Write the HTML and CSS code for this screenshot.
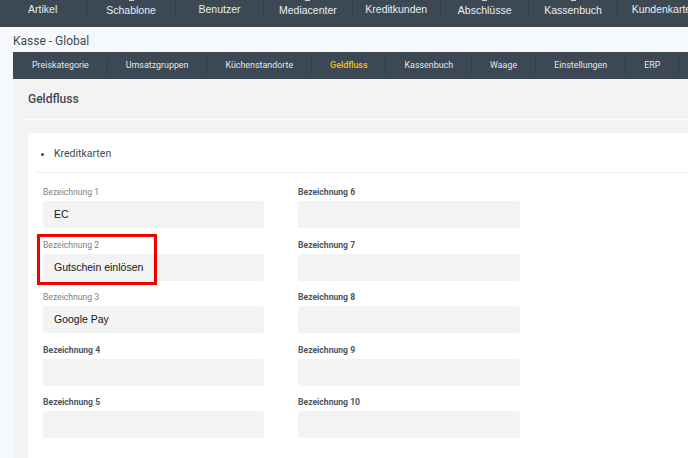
FILE: index.html
```html
<!DOCTYPE html>
<html lang="de">
<head>
<meta charset="utf-8">
<title>Kasse - Global</title>
<link rel="stylesheet" href="styles.css">
</head>
<body>
<nav class="topnav">
  <div class="topitem">Artikel</div>
  <div class="topitem has-icon"><span class="stub"></span>Schablone</div>
  <div class="topitem">Benutzer</div>
  <div class="topitem has-icon"><span class="stub"></span>Mediacenter</div>
  <div class="topitem">Kreditkunden</div>
  <div class="topitem has-icon"><span class="stub"></span>Abschlüsse</div>
  <div class="topitem has-icon"><span class="stub"></span>Kassenbuch</div>
  <div class="topitem">Kundenkarte</div>
</nav>
<h1 class="page-title">Kasse - Global</h1>
<div class="content">
  <nav class="subnav">
    <div class="subitem first">Preiskategorie</div>
    <div class="subitem">Umsatzgruppen</div>
    <div class="subitem">Küchenstandorte</div>
    <div class="subitem active">Geldfluss</div>
    <div class="subitem">Kassenbuch</div>
    <div class="subitem">Waage</div>
    <div class="subitem">Einstellungen</div>
    <div class="subitem">ERP</div>
    <div class="subitem"></div>
  </nav>
  <section class="panel">
    <h2 class="panel-head">Geldfluss</h2>
    <div class="panel-rule"></div>
    <div class="panel-body">
      <div class="card">
        <ul class="card-head"><li>Kreditkarten</li></ul>
        <div class="card-rule"></div>
        <div class="fields">
          <div class="col">
            <div class="field"><label class="lbl filled">Bezeichnung 1</label><div class="input">EC</div></div>
            <div class="field marked"><label class="lbl filled">Bezeichnung 2</label><div class="input">Gutschein einlösen</div><span class="redbox"></span></div>
            <div class="field"><label class="lbl filled">Bezeichnung 3</label><div class="input">Google Pay</div></div>
            <div class="field"><label class="lbl">Bezeichnung 4</label><div class="input"></div></div>
            <div class="field"><label class="lbl">Bezeichnung 5</label><div class="input"></div></div>
          </div>
          <div class="col wide">
            <div class="field"><label class="lbl">Bezeichnung 6</label><div class="input"></div></div>
            <div class="field"><label class="lbl">Bezeichnung 7</label><div class="input"></div></div>
            <div class="field"><label class="lbl">Bezeichnung 8</label><div class="input"></div></div>
            <div class="field"><label class="lbl">Bezeichnung 9</label><div class="input"></div></div>
            <div class="field"><label class="lbl">Bezeichnung 10</label><div class="input"></div></div>
          </div>
        </div>
      </div>
    </div>
  </section>
</div>
</body>
</html>
```
FILE: styles.css
```css
html, body {
  margin: 0;
  padding: 0;
  overflow: hidden;
  height: 458px;
}
body {
  background: #f5f9fc;
  font-family: Roboto, "Liberation Sans", sans-serif;
  color: #3d4a56;
}
.topnav {
  display: flex;
  height: 27px;
  background: #3c4955;
  align-items: flex-start;
  white-space: nowrap;
  overflow: hidden;
  margin-left: -1px;
}
.topitem {
  flex: 0 0 88.4px;
  height: 16px;
  box-sizing: border-box;
  padding-top: 3px;
  display: flex;
  flex-direction: column;
  align-items: center;
  font-family: "Liberation Sans", Arial, sans-serif;
  font-size: 10.5px;
  line-height: 12px;
  color: #e9edf0;
  border-right: 1px solid #303c47;
}
.topitem.has-icon {
  padding-top: 0;
}
.stub {
  display: block;
  width: 5px;
  height: 2px;
  background: #c9cfd4;
  margin-bottom: 3px;
}
.page-title {
  margin: 0;
  height: 25px;
  box-sizing: border-box;
  padding: 4px 0 0 13px;
  font-size: 12px;
  line-height: 21px;
  font-weight: 400;
  color: #3d4a56;
}
.content {
  margin-left: 13px;
}
.subnav {
  display: flex;
  align-items: center;
  height: 27px;
  background: #3c4955;
  white-space: nowrap;
  overflow: hidden;
}
.subitem {
  padding: 0 18px;
  height: 17px;
  line-height: 17px;
  font-size: 8.9px;
  color: #e3e7ea;
  border-right: 1px solid #2f3b46;
}
.subitem.first {
  padding-left: 19px;
}
.subitem.active {
  color: #f5c400;
  font-weight: 500;
}
.panel {
  background: #f3f3f3;
  width: 700px;
  height: 400px;
}
.panel-head {
  margin: 0;
  padding: 0 15px;
  height: 40px;
  line-height: 40px;
  font-size: 12px;
  font-weight: 500;
  color: #3d4a56;
}
.panel-rule {
  margin-left: 7px;
  height: 1px;
  background: #fbfbfb;
}
.panel-body {
  padding: 13px 0 0 15px;
}
.card {
  background: #fff;
  height: 340px;
}
.card-head {
  margin: 0;
  padding: 0 0 0 26px;
  height: 39px;
  line-height: 41px;
  font-size: 10.5px;
  color: #3d4a56;
}
.card-head li {
  list-style: disc;
  padding-left: 0;
}
.card-head li::marker {
  font-size: 11px;
}
.card-rule {
  margin-left: 8px;
  height: 1px;
  background: #f1f1f1;
}
.fields {
  display: flex;
  gap: 34px;
  padding: 13px 0 0 15px;
}
.col {
  width: 221px;
}
.col.wide {
  width: 222px;
}
.field {
  position: relative;
  margin-bottom: 11.5px;
}
.lbl {
  display: block;
  height: 12px;
  line-height: 12px;
  margin-bottom: 3px;
  font-size: 8.6px;
  font-weight: 700;
  color: #4a5661;
}
.lbl.filled {
  font-weight: 400;
  color: #7b7e81;
}
.input {
  height: 26px;
  line-height: 26px;
  padding-left: 11px;
  background: #f3f3f3;
  border-radius: 3px;
  box-shadow: 0 1px 1px rgba(0, 0, 0, 0.06);
  font-family: "Liberation Sans", Arial, sans-serif;
  font-size: 10.5px;
  color: #151515;
}
.redbox {
  position: absolute;
  left: -6px;
  top: -4.5px;
  width: 120px;
  height: 51px;
  box-sizing: border-box;
  border: 3px solid #f00000;
}
```
